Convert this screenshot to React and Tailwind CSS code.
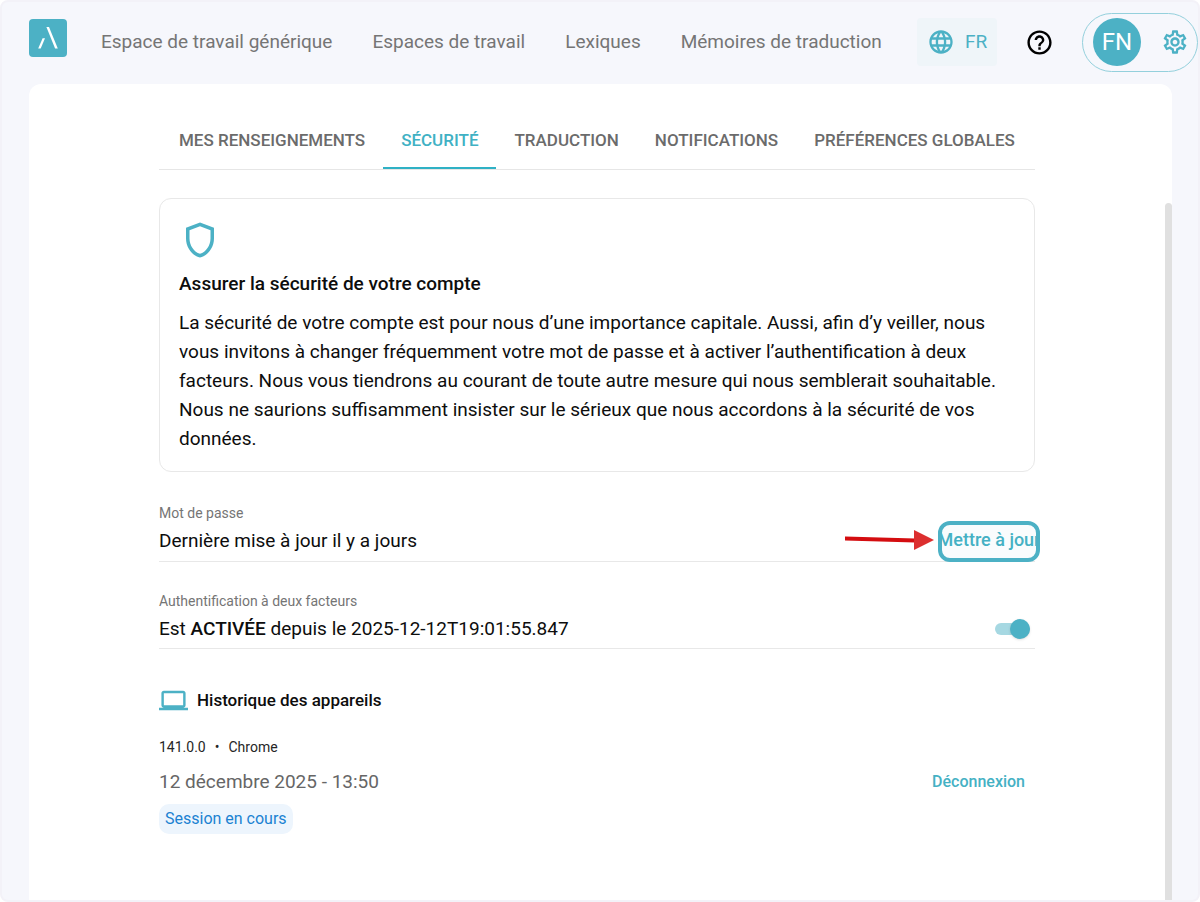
import { MdLanguage, MdHelpOutline, MdOutlineSettings, MdOutlineShield, MdOutlineLaptop } from "react-icons/md";

const NAV = ["Espace de travail générique", "Espaces de travail", "Lexiques", "Mémoires de traduction"];

const TABS = [
  { label: "MES RENSEIGNEMENTS" },
  { label: "SÉCURITÉ", active: true },
  { label: "TRADUCTION" },
  { label: "NOTIFICATIONS" },
  { label: "PRÉFÉRENCES GLOBALES" },
];

function Logo() {
  return (
    <a href="#" aria-label="Accueil" className="mb-2 shrink-0">
      <svg viewBox="0 0 38 38" className="size-[38px]" aria-hidden="true">
        <rect width="38" height="38" rx="4" fill="#4cb1c5" />
        <path d="M17.4 8h2.6l8.8 21.4h-2.7z" fill="#fff" />
        <path d="M13.6 19.2h2.4l-4.3 10.2H9.2z" fill="#fff" />
      </svg>
    </a>
  );
}

function Header() {
  return (
    <header className="mb-[2px] flex h-20 items-center pl-[27px]">
      <Logo />
      <nav className="ml-[34px] flex gap-10 text-[19px] leading-6 text-[#757575]">
        {NAV.map((item) => (
          <a key={item} href="#" className="whitespace-nowrap">{item}</a>
        ))}
      </nav>
      <div className="ml-auto flex items-center">
        <button type="button" className="flex h-12 w-20 items-center gap-[10px] rounded bg-[#eff5f9] pl-[10px] text-[19px] text-[#4cb1c5]">
          <MdLanguage className="size-7 shrink-0" />
          FR
        </button>
        <button type="button" aria-label="Aide" className="ml-7 text-black">
          <MdHelpOutline className="size-[29px]" />
        </button>
        <button type="button" className="ml-7 flex h-[59px] w-[116px] items-center justify-between rounded-full border border-[#94d0dc] pr-2 pl-[10px]">
          <span className="flex size-12 items-center justify-center rounded-full bg-[#4cb1c5] text-[24px] text-white">FN</span>
          <MdOutlineSettings className="size-7 text-[#4cb1c5]" />
        </button>
      </div>
    </header>
  );
}

function Tabs() {
  return (
    <div role="tablist" className="flex border-b border-[#e6e6e6] pl-[2px]">
      {TABS.map(({ label, active }) => (
        <button
          key={label}
          type="button"
          role="tab"
          aria-selected={!!active}
          className={
            "h-[58px] border-b-2 px-[18px] pt-[3px] text-[17px] font-medium whitespace-nowrap " +
            (active ? "border-[#2fb1c5] text-[#40b1c4]" : "border-transparent text-[#6b6b6b]")
          }
        >
          {label}
        </button>
      ))}
    </div>
  );
}

function Arrow() {
  return (
    <svg viewBox="0 0 90 20" className="mr-[3px] mb-1 h-5 w-[90px]" aria-hidden="true">
      <path d="M0 6.5 70 8.4v4L0 10.5z" fill="#d40d10" />
      <path d="M69 0 89 10 69 20z" fill="#dc2f2f" />
    </svg>
  );
}

export default function App() {
  return (
    <div className="flex min-h-screen flex-col rounded-lg border-2 border-[#f3f2f8] bg-[#f6f7fc] font-['Roboto',sans-serif]">
      <Header />
      <main className="mr-[26px] ml-[27px] flex grow rounded-xl rounded-b-none bg-white">
        <div className="grow">
          <div className="mx-auto w-full max-w-[876px] pt-[27px] pb-16">
            <Tabs />

            <section className="mt-7 rounded-xl border border-[#e8e8e8] px-[19px] pt-5 pb-[18px] text-[#0d0d0d]">
              <MdOutlineShield className="size-[42px] text-[#4cb1c5]" />
              <h2 className="mt-2 text-[19px] leading-[29px] font-medium">Assurer la sécurité de votre compte</h2>
              <p className="mt-[10px] text-[19px] leading-[29px]">
                La sécurité de votre compte est pour nous d’une importance capitale. Aussi, afin d’y veiller, nous
                vous invitons à changer fréquemment votre mot de passe et à activer l’authentification à deux
                facteurs. Nous vous tiendrons au courant de toute autre mesure qui nous semblerait souhaitable.
                Nous ne saurions suffisamment insister sur le sérieux que nous accordons à la sécurité de vos
                données.
              </p>
            </section>

            <div className="mt-[29px] flex items-end justify-between border-b border-[#e8e8e8]">
              <div className="pb-[6px]">
                <h3 className="text-[14px] leading-[25px] text-[#757575]">Mot de passe</h3>
                <p className="text-[19px] leading-[29px] text-[#0d0d0d]">Dernière mise à jour il y a jours</p>
              </div>
              <div className="-mr-[5px] -mb-px flex items-center">
                <Arrow />
                <button type="button" className="flex h-[41px] w-[102px] items-center justify-center overflow-hidden rounded-xl border-4 border-[#4cb1c5] bg-[#f9fcfd] pb-[4px] text-[18px] font-medium whitespace-nowrap text-[#45b1c4]">
                  Mettre à jour
                </button>
              </div>
            </div>

            <div className="mt-[27px] flex items-end justify-between border-b border-[#e8e8e8]">
              <div className="pb-[5px]">
                <h3 className="text-[14px] leading-[25px] text-[#757575]">
                  <label htmlFor="two-factor">Authentification à deux facteurs</label>
                </h3>
                <p className="text-[19px] leading-[29px] text-[#0d0d0d]">
                  Est <strong className="font-medium">ACTIVÉE</strong> depuis le 2025-12-12T19:01:55.847
                </p>
              </div>
              <input
                id="two-factor"
                type="checkbox"
                role="switch"
                defaultChecked
                className="mr-[5px] mb-[13px] flex h-3 w-[35px] appearance-none items-center justify-end rounded-full bg-[#a6d8e2] before:size-5 before:shrink-0 before:rounded-full before:bg-[#4cb1c5] before:shadow before:content-['']"
              />
            </div>

            <section className="mt-[37px]">
              <h2 className="flex items-center gap-[9px] text-[17px] leading-[29px] font-medium text-[#0d0d0d]">
                <MdOutlineLaptop className="size-[29px] text-[#4cb1c5]" />
                Historique des appareils
              </h2>
              <div className="mt-5 flex items-center justify-between">
                <div>
                  <p className="flex gap-[9px] text-[14px] leading-6 text-[#262626]">
                    <span>141.0.0</span>
                    <span>•</span>
                    <span>Chrome</span>
                  </p>
                  <p className="mt-2 text-[19px] leading-[29px] text-[#666666]">12 décembre 2025 - 13:50</p>
                  <p className="mt-2 w-fit rounded-[10px] bg-[#edf5fd] px-[6px] text-[16px] leading-[30px] text-[#1b82d2]">
                    Session en cours
                  </p>
                </div>
                <button type="button" className="mr-[10px] mb-[6px] text-[16px] font-medium text-[#45b1c4]">Déconnexion</button>
              </div>
            </section>
          </div>
        </div>
        <div className="flex w-[7px] pt-[119px]" aria-hidden="true">
          <div className="grow rounded-t-full bg-[#e0e0e0]" />
        </div>
      </main>
    </div>
  );
}
